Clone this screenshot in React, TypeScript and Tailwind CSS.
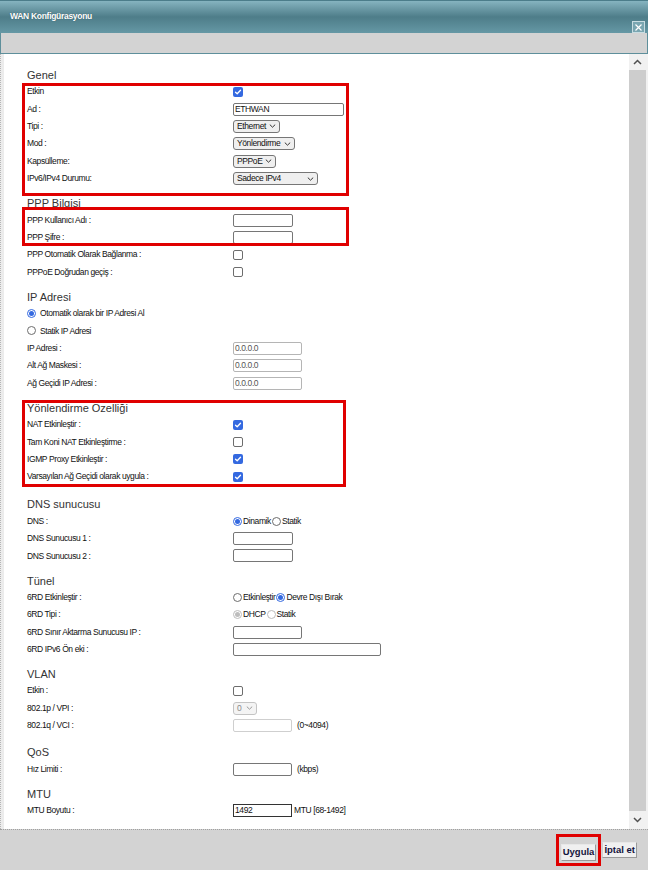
import React from 'react'

const font = { fontFamily: '"Liberation Sans", Arial, sans-serif' }

function Title({ children, className = '' }: { children: React.ReactNode; className?: string }) {
  return (
    <div className={`h-[24px] pt-[10px] text-[11px] leading-[12px] text-[#333] ${className}`}>{children}</div>
  )
}

function Row({ label, children }: { label: string; children?: React.ReactNode }) {
  return (
    <div className="flex items-center h-[17.4px]">
      <div className="w-[206px] shrink-0 text-[8.5px] tracking-[-0.4px] text-[#111] whitespace-nowrap">{label}</div>
      <div className="flex items-center gap-[5px] text-[8.5px] tracking-[-0.4px] text-[#111] whitespace-nowrap">
        {children}
      </div>
    </div>
  )
}

function Check({ on }: { on?: boolean }) {
  if (on) {
    return (
      <span className="flex items-center justify-center w-[10px] h-[10px] rounded-[2px] bg-[#3469e0]">
        <svg width="8" height="8" viewBox="0 0 8 8" fill="none">
          <path d="M1.5 4.2 L3.2 5.8 L6.5 2.2" stroke="white" strokeWidth="1.3" strokeLinecap="round" strokeLinejoin="round" />
        </svg>
      </span>
    )
  }
  return <span className="block w-[10px] h-[10px] rounded-[2px] border border-[#6d6d6d] bg-white" />
}

function Radio({ on, disabled }: { on?: boolean; disabled?: boolean }) {
  const ring = disabled ? 'border-[#bdbdbd]' : on ? 'border-[#3469e0]' : 'border-[#6d6d6d]'
  const dot = disabled ? 'bg-[#bdbdbd]' : 'bg-[#3469e0]'
  return (
    <span className={`flex items-center justify-center w-[9px] h-[9px] rounded-full border bg-white shrink-0 ${ring}`}>
      {on && <span className={`block w-[5px] h-[5px] rounded-full ${dot}`} />}
    </span>
  )
}

function Chevron({ color = '#333' }: { color?: string }) {
  return (
    <svg width="7" height="4" viewBox="0 0 7 4" fill="none">
      <path d="M0.8 0.6 L3.5 3.2 L6.2 0.6" stroke={color} strokeWidth="1" />
    </svg>
  )
}

function Select({ value, className, disabled }: { value: string; className: string; disabled?: boolean }) {
  return (
    <div
      className={`flex items-center justify-between h-[13px] border rounded-[3px] px-[3px] text-[8.5px] ${
        disabled ? 'border-[#c4c4c4] bg-[#f4f4f4] text-[#8a8a8a]' : 'border-[#767676] bg-[#efefef] text-[#111]'
      } ${className}`}
    >
      <span>{value}</span>
      <Chevron color={disabled ? '#999' : '#333'} />
    </div>
  )
}

function Box({ value = '', className, tone = 'dark' }: { value?: string; className: string; tone?: 'dark' | 'gray' | 'light' }) {
  const look =
    tone === 'dark'
      ? 'border-[#767676] text-[#111]'
      : tone === 'gray'
        ? 'border-[#b5b5b5] text-[#555]'
        : 'border-[#cfcfcf] text-[#555]'
  return (
    <div className={`h-[13px] border rounded-[2px] bg-white px-[1px] text-[8.5px] leading-[11px] ${look} ${className}`}>
      {value}
    </div>
  )
}

function RedBox({ className }: { className: string }) {
  return <span className={`absolute border-[3px] border-[#e00000] pointer-events-none ${className}`} />
}

export default function App() {
  return (
    <div className="w-[648px] h-[870px] flex flex-col bg-white overflow-hidden" style={font}>
      {/* title bar */}
      <div className="h-[33px] flex justify-between px-[10px] pr-[3px] border-t border-[#4c7d8a] bg-gradient-to-b from-[#86b4c0] via-[#4e7d89] to-[#6598a5]">
        <div className="pt-[9px] text-[8.5px] tracking-[-0.3px] font-bold text-white [text-shadow:0_0_1px_#2d4f58]">
          WAN Konfigürasyonu
        </div>
        <div className="self-end flex items-center justify-center w-[13px] h-[12px] border border-[#c9dde2] bg-[#7aa6b1]">
          <svg width="9" height="9" viewBox="0 0 9 9">
            <path d="M1.5 1.5 L7.5 7.5 M7.5 1.5 L1.5 7.5" stroke="white" strokeWidth="1.2" />
          </svg>
        </div>
      </div>
      <div className="h-[21px] bg-[#d3d3d3] border-x border-b border-[#5e8f9b]" />

      {/* body */}
      <div className="h-[775px] flex">
        <div className="w-[4px] border-l border-dotted border-[#b5b5b5] bg-[#ececec]" />
        <div className="flex-1 pl-[23px] pt-[5px] overflow-hidden">
          <Title>Genel</Title>
          <div className="relative">
            <RedBox className="-left-[5px] top-0 -bottom-[9px] w-[327px]" />
            <Row label="Etkin">
              <Check on />
            </Row>
            <Row label="Ad :">
              <Box value="ETHWAN" className="w-[111px]" />
            </Row>
            <Row label="Tipi :">
              <Select value="Ethernet" className="w-[47px]" />
            </Row>
            <Row label="Mod :">
              <Select value="Yönlendirme" className="w-[62px]" />
            </Row>
            <Row label="Kapsülleme:">
              <Select value="PPPoE" className="w-[43px]" />
            </Row>
            <Row label="IPv6/IPv4 Durumu:">
              <Select value="Sadece IPv4" className="w-[85px]" />
            </Row>
          </div>

          <Title>PPP Bilgisi</Title>
          <div className="relative">
            <RedBox className="-left-[5px] -top-[4px] bottom-0 w-[327px]" />
            <Row label="PPP Kullanıcı Adı :">
              <Box className="w-[60px]" />
            </Row>
            <Row label="PPP Şifre :">
              <Box className="w-[60px]" />
            </Row>
          </div>
          <Row label="PPP Otomatik Olarak Bağlanma :">
            <Check />
          </Row>
          <Row label="PPPoE Doğrudan geçiş :">
            <Check />
          </Row>

          <Title>IP Adresi</Title>
          <div className="flex items-center gap-[4px] h-[17.4px] text-[8.5px] tracking-[-0.4px] text-[#111]">
            <Radio on /> Otomatik olarak bir IP Adresi Al
          </div>
          <div className="flex items-center gap-[4px] h-[17.4px] text-[8.5px] tracking-[-0.4px] text-[#111]">
            <Radio /> Statik IP Adresi
          </div>
          <Row label="IP Adresi :">
            <Box value="0.0.0.0" tone="gray" className="w-[69px]" />
          </Row>
          <Row label="Alt Ağ Maskesi :">
            <Box value="0.0.0.0" tone="gray" className="w-[69px]" />
          </Row>
          <Row label="Ağ Geçidi IP Adresi :">
            <Box value="0.0.0.0" tone="gray" className="w-[69px]" />
          </Row>

          <div className="relative">
            <RedBox className="-left-[5px] top-[8px] -bottom-[2px] w-[324px]" />
            <Title>Yönlendirme Ozelliği</Title>
            <Row label="NAT Etkinleştir :">
              <Check on />
            </Row>
            <Row label="Tam Koni NAT Etkinleştirme :">
              <Check />
            </Row>
            <Row label="IGMP Proxy Etkinleştir :">
              <Check on />
            </Row>
            <Row label="Varsayılan Ağ Geçidi olarak uygula :">
              <Check on />
            </Row>
          </div>

          <Title className="mt-[3px]">DNS sunucusu</Title>
          <Row label="DNS :">
            <span className="flex items-center gap-[1px]">
              <Radio on />
              Dinamik
              <Radio />
              Statik
            </span>
          </Row>
          <Row label="DNS Sunucusu 1 :">
            <Box className="w-[60px]" />
          </Row>
          <Row label="DNS Sunucusu 2 :">
            <Box className="w-[60px]" />
          </Row>

          <Title>Tünel</Title>
          <Row label="6RD Etkinleştir :">
            <span className="flex items-center gap-[1px]">
              <Radio />
              Etkinleştir
              <Radio on />
              Devre Dışı Bırak
            </span>
          </Row>
          <Row label="6RD Tipi :">
            <span className="flex items-center gap-[1px]">
              <Radio on disabled />
              DHCP
              <Radio disabled />
              Statik
            </span>
          </Row>
          <Row label="6RD Sınır Aktarma Sunucusu IP :">
            <Box className="w-[69px]" />
          </Row>
          <Row label="6RD IPv6 Ön eki :">
            <Box className="w-[148px]" />
          </Row>

          <Title>VLAN</Title>
          <Row label="Etkin :">
            <Check />
          </Row>
          <Row label="802.1p / VPI :">
            <Select value="0" disabled className="w-[24px]" />
          </Row>
          <Row label="802.1q / VCI :">
            <Box tone="light" className="w-[59px]" />
            <span>(0~4094)</span>
          </Row>

          <Title className="mt-[2px]">QoS</Title>
          <Row label="Hız Limiti :">
            <Box className="w-[59px]" />
            <span>(kbps)</span>
          </Row>

          <Title>MTU</Title>
          <Row label="MTU Boyutu :">
            <span className="flex items-center gap-[2px]">
              <Box value="1492" className="w-[59px] !rounded-none !border-[#333]" />
              <span>MTU [68-1492]</span>
            </span>
          </Row>
        </div>

        {/* scrollbar */}
        <div className="w-[17px] flex flex-col bg-[#f1f1f1]">
          <div className="h-[16px] flex items-center justify-center">
            <svg width="9" height="6" viewBox="0 0 9 6" fill="none">
              <path d="M1 5 L4.5 1.5 L8 5" stroke="#505050" strokeWidth="1.5" />
            </svg>
          </div>
          <div className="flex-1 bg-[#cdcdcd]" />
          <div className="h-[18px] flex items-center justify-center">
            <svg width="9" height="6" viewBox="0 0 9 6" fill="none">
              <path d="M1 1 L4.5 4.5 L8 1" stroke="#505050" strokeWidth="1.5" />
            </svg>
          </div>
        </div>
        <div className="w-[2px] bg-[#f1f1f1]" />
      </div>

      {/* footer */}
      <div className="h-[41px] flex items-center justify-end gap-[1px] pr-[11px] bg-[#d3d3d3] border-t border-dotted border-[#a0a0a0]">
        <div className="border-[3px] border-[#e00000] px-[2px] py-[1px]">
          <button className="h-[17px] px-[1px] text-[9.5px] font-bold text-[#14143c] bg-[#f0f0f0] border border-[#9a9a9a] border-t-[#e8e8e8] border-l-[#e8e8e8]">
            Uygula
          </button>
        </div>
        <button className="h-[16px] px-[1px] text-[9.5px] font-bold text-[#14143c] bg-[#f0f0f0] border border-[#9a9a9a] border-t-[#e8e8e8] border-l-[#d0d0d0]">
          İptal et
        </button>
      </div>
    </div>
  )
}
